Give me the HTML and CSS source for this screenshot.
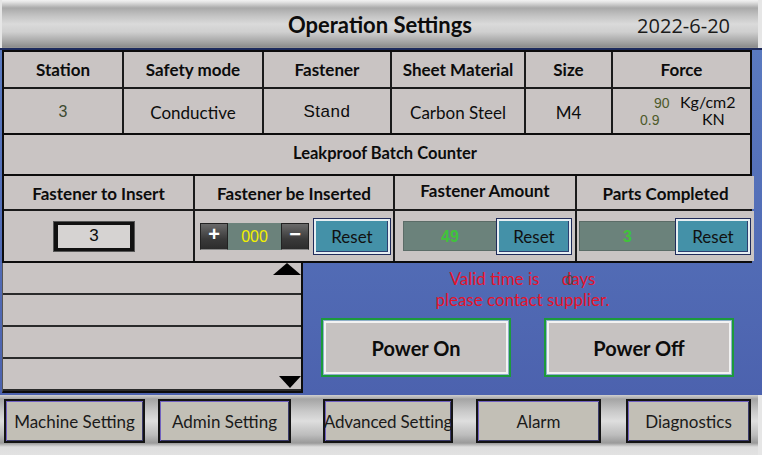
FILE: index.html
```html
<!DOCTYPE html>
<html>
<head>
<meta charset="utf-8">
<link rel="stylesheet" href="styles.css">
</head>
<body>
<div class="app">
  <header class="header">
    <div class="title">Operation Settings</div>
    <div class="date">2022-6-20</div>
  </header>
  <main class="main">
    <div class="table">
      <div class="grid g6">
        <div class="cell th">Station</div>
        <div class="cell th">Safety mode</div>
        <div class="cell th">Fastener</div>
        <div class="cell th">Sheet Material</div>
        <div class="cell th">Size</div>
        <div class="cell th">Force</div>
        <div class="cell td"><span class="num">3</span></div>
        <div class="cell td">Conductive</div>
        <div class="cell td"><span class="arial">Stand</span></div>
        <div class="cell td">Carbon Steel</div>
        <div class="cell td">M4</div>
        <div class="cell td force">
          <div class="frow"><span class="fval v1">90</span><span class="funit">Kg/cm2</span></div>
          <div class="frow"><span class="fval v2">0.9</span><span class="funit u2">KN</span></div>
        </div>
      </div>
      <div class="grid g1">
        <div class="cell th leak">Leakproof Batch Counter</div>
      </div>
      <div class="grid g4">
        <div class="cell th h2">Fastener to Insert</div>
        <div class="cell th h2">Fastener be Inserted</div>
        <div class="cell th h2 up">Fastener Amount</div>
        <div class="cell th h2">Parts Completed</div>
        <div class="cell ctl">
          <div class="input">3</div>
        </div>
        <div class="cell ctl c2">
          <div class="stepper">
            <div class="step">+</div>
            <div class="disp yellow">000</div>
            <div class="step">−</div>
          </div>
          <div class="reset">Reset</div>
        </div>
        <div class="cell ctl c3">
          <div class="disp green wide">49</div>
          <div class="reset">Reset</div>
        </div>
        <div class="cell ctl c3">
          <div class="disp green wide2">3</div>
          <div class="reset">Reset</div>
        </div>
      </div>
    </div>
    <div class="lower">
      <div class="list">
        <div class="lrow"></div>
        <div class="lrow"></div>
        <div class="lrow"></div>
        <div class="lrow"></div>
        <div class="arrow aup"></div>
        <div class="arrow adown"></div>
      </div>
      <div class="panel">
        <div class="msg">
          <div class="line1">Valid time is <span class="days">days<span class="zero">0</span></span></div>
          <div>please contact supplier.</div>
        </div>
        <div class="power">
          <div class="pbtn">Power On</div>
          <div class="pbtn">Power Off</div>
        </div>
      </div>
    </div>
  </main>
  <footer class="footer">
    <div class="nbtn b1">Machine Setting</div>
    <div class="nbtn b2">Admin Setting</div>
    <div class="nbtn b3">Advanced Setting</div>
    <div class="nbtn b4">Alarm</div>
    <div class="nbtn b5">Diagnostics</div>
  </footer>
</div>
</body>
</html>
```
FILE: styles.css
```css
* { box-sizing: border-box; }
html, body { margin: 0; padding: 0; }
body {
  width: 762px;
  height: 455px;
  overflow: hidden;
  font-family: "Lato", "Open Sans", sans-serif;
  color: #0c0c0c;
  background: #e6e6e6;
}
.app {
  width: 762px;
  height: 455px;
  display: flex;
  flex-direction: column;
}
.header {
  height: 48px;
  flex: none;
  position: relative;
  display: flex;
  align-items: center;
  justify-content: center;
  background: linear-gradient(to bottom, #f2f2f2 0, #e4e4e4 2px, #a9a9a9 8px, #c4c4c4 16px, #dadada 24px, #cfcfcf 32px, #a4a4a4 42px, #8c8c8c 47px, #9a9a9a 48px);
  margin: 0 4px 0 2px;
}
.title {
  font-weight: 700;
  font-size: 22px;
  padding-top: 1px;
}
.date {
  position: absolute;
  right: 28px;
  top: 12px;
  font-size: 20px;
  font-family: "Open Sans", sans-serif;
  color: #1a1a1a;
}
.main {
  flex: none;
  height: 347px;
  background: linear-gradient(to bottom, #5a7ac0, #4c62ae);
  border-top: 2px solid #1d2a5c;
  padding: 0 10px 0 2px;
  display: flex;
  flex-direction: column;
}
.table {
  width: 750px;
  border: 2px solid #0c0c0c;
  background: #0c0c0c;
  display: flex;
  flex-direction: column;
  gap: 2px;
}
.grid {
  display: grid;
  gap: 2px;
  background: #1a1a1a;
}
.g6 {
  grid-template-columns: 118px 138px 126px 132px 85px 1fr;
  grid-template-rows: 35px 44px;
}
.g1 { grid-template-columns: 1fr; grid-template-rows: 39px; }
.g4 {
  grid-template-columns: 189px 198px 180px 1fr;
  grid-template-rows: 33px 50px;
}
.cell {
  background: #c9c4c3;
  display: flex;
  align-items: center;
  justify-content: center;
  font-size: 17px;
}
.th { font-weight: 700; font-size: 17px; }
.leak { font-size: 16.5px; padding-bottom: 4px; padding-left: 16px; }
.h2 { padding-top: 2px; }
.h2.up { padding-top: 0; padding-bottom: 4px; }
.td { font-size: 17px; padding-top: 2px; }
.num { font-family: "Liberation Sans", sans-serif; color: #3d4a30; font-size: 16px; }
.arial { font-family: "Liberation Sans", sans-serif; font-size: 17px; letter-spacing: 0.5px; }
.force {
  flex-direction: column;
  align-items: stretch;
  justify-content: center;
  padding: 0;
  line-height: 16px;
}
.frow { display: flex; align-items: baseline; height: 17px; }
.fval { font-family: "Liberation Sans", sans-serif; font-size: 14px; color: #4d5a2a; }
.v1 { margin-left: 41px; width: 26px; }
.v2 { margin-left: 27px; width: 62px; }
.funit { font-size: 16px; }
.ctl { justify-content: flex-start; }
.input {
  margin-left: 50px;
  width: 80px;
  height: 29px;
  border: 3px solid #111;
  border-left-width: 4px;
  border-right-width: 4px;
  outline: 1px solid #555;
  background: #d6d3d2;
  font-family: "Liberation Sans", sans-serif;
  font-size: 17px;
  display: flex;
  align-items: center;
  justify-content: center;
}
.c2 { padding-left: 5px; gap: 5px; }
.stepper { display: flex; height: 27px; }
.step {
  width: 28px;
  height: 27px;
  background: linear-gradient(to bottom, #6a6a6a, #3a3a3a 60%, #2c2c2c);
  border: 1px solid #222;
  border-bottom-color: #888;
  color: #fff;
  font-family: "Liberation Sans", sans-serif;
  font-weight: 700;
  font-size: 20px;
  display: flex;
  align-items: center;
  justify-content: center;
  padding-bottom: 4px;
}
.disp {
  background: #6b827b;
  font-family: "Liberation Sans", sans-serif;
  font-size: 16px;
  display: flex;
  align-items: center;
  justify-content: center;
  padding-top: 2px;
}
.yellow { width: 53px; height: 27px; color: #f2f000; }
.green { color: #3fc43a; font-weight: 700; height: 30px; border: 1px solid #5b6c67; }
.wide { width: 94px; margin-left: 8px; }
.wide2 { width: 97px; margin-left: 2px; }
.reset {
  width: 76px;
  height: 35px;
  background: #4491a8;
  border: 2px solid #e6eef2;
  outline: 1px solid #1f2b5a;
  box-shadow: inset -1px -1px 0 #2c3e70;
  font-size: 17px;
  display: flex;
  align-items: center;
  justify-content: center;
  color: #111;
}
.c3 .reset { width: 74px; }
.c3 { padding-right: 4px; }
.lower {
  flex: 1;
  display: flex;
}
.list {
  position: relative;
  width: 301px;
  height: 130px;
  background: #c9c4c3;
  border-right: 2px solid #0c0c0c;
  border-left: 1px solid #555;
  border-bottom: 2px solid #0c0c0c;
  display: flex;
  flex-direction: column;
}
.lrow {
  flex: none;
  height: 32px;
  border-bottom: 2px solid #2a2a2a;
}
.arrow {
  position: absolute;
  width: 0;
  height: 0;
}
.aup {
  top: 0;
  right: 0;
  border-left: 14px solid transparent;
  border-right: 14px solid transparent;
  border-bottom: 12px solid #000;
}
.adown {
  top: 113px;
  right: 0;
  border-left: 11px solid transparent;
  border-right: 11px solid transparent;
  border-top: 12px solid #000;
}
.panel {
  flex: 1;
  display: flex;
  flex-direction: column;
  align-items: center;
}
.msg {
  margin-top: 5px;
  margin-left: -10px;
  color: #e4142c;
  font-size: 17px;
  line-height: 21px;
  text-align: center;
}
.days { position: relative; margin-left: 18px; }
.zero {
  position: absolute;
  left: 4px;
  top: 4px;
  color: #3f4a48;
  font-family: "Liberation Sans", sans-serif;
  font-size: 14px;
  line-height: 16px;
}
.power {
  display: flex;
  gap: 33px;
  margin-top: 8px;
}
.pbtn {
  width: 190px;
  height: 59px;
  background: #c6c2c1;
  border: 2px solid #1c9a3c;
  box-shadow: inset 0 0 0 1px #8fb0c8, inset 0 0 0 3px #f2f2f2;
  font-weight: 700;
  font-size: 20px;
  display: flex;
  align-items: center;
  justify-content: center;
}
.footer {
  flex: 1;
  display: flex;
  align-items: flex-start;
  padding-top: 4px;
  background: linear-gradient(to bottom, #d0d0d0 0, #a4a4a4 4px, #c8c8c8 16px, #dedede 26px, #bcbcbc 40px, #9a9a9a 48px, #dedede 52px, #e2e2e2 60px);
  margin: 0 4px 0 0;
}
.nbtn {
  height: 44px;
  background: #c2bfb6;
  border: 2px solid #141414;
  box-shadow: inset 1px 1px 0 #7060c0, inset -1px -1px 0 #3b3b6a;
  font-size: 17px;
  white-space: nowrap;
  display: flex;
  align-items: center;
  justify-content: center;
  color: #1a1a1a;
}
.b1 { width: 141px; margin-left: 4px; }
.b2 { width: 133px; margin-left: 13px; }
.b3 { width: 130px; margin-left: 32px; letter-spacing: -0.15px; }
.b4 { width: 125px; margin-left: 23px; }
.b5 { width: 125px; margin-left: 25px; }
```
